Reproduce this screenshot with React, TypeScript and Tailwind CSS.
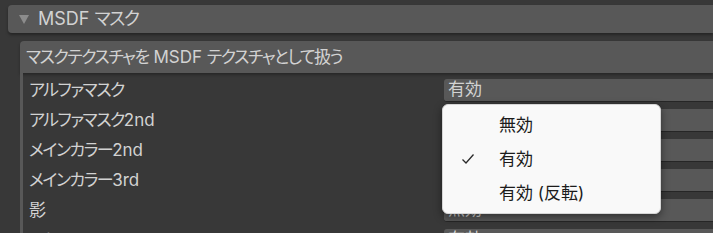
import { memo } from 'react'

const FONT = "font-['Inter','Noto_Sans_CJK_JP',sans-serif] [font-feature-settings:'palt']"

const ROWS = [
  { label: 'アルファマスク', value: '有効' },
  { label: 'アルファマスク2nd', value: '無効' },
  { label: 'メインカラー2nd', value: '無効' },
  { label: 'メインカラー3rd', value: '無効' },
  { label: '影', value: '無効' },
  { label: 'リムライト', value: '有効' },
]

const OPTIONS = [
  { label: '無効', checked: false },
  { label: '有効', checked: true },
  { label: '有効 (反転)', checked: false },
]

// katakana in the editor font is narrower than Noto's, so only the kana runs get tightened
function Label({ text }: { text: string }) {
  const parts = text.split(/([A-Za-z0-9 ]+)/).filter(Boolean)
  return (
    <>
      {parts.map((p, i) =>
        /^[A-Za-z0-9 ]+$/.test(p) ? (
          <span key={i} className="whitespace-pre">{p}</span>
        ) : (
          <span key={i} className="tracking-[-1.5px]">{p}</span>
        )
      )}
    </>
  )
}

function Check() {
  return (
    <svg width="14" height="12" viewBox="0 0 14 12" className="block">
      <polyline points="1.5,6.5 5,10 12.5,1.5" fill="none" stroke="#2a2a2a" strokeWidth="1.3" />
    </svg>
  )
}

function App() {
  return (
    <div className={`relative w-[713px] h-[233px] overflow-hidden bg-[#383838] text-[17px] leading-none text-[#d2d2d2] ${FONT}`}>
      {/* Foldout header */}
      <div className="pt-[5px] pl-[8px]">
        <div className="flex h-[28px] items-center rounded-l-[4px] bg-[#585858] pl-[11px] shadow-[0_2px_3px_rgba(0,0,0,0.35)]">
          <svg width="10" height="10" viewBox="0 0 10 10" className="block">
            <polygon points="0,1 10,1 5,10" fill="#8c8c8c" />
          </svg>
          <span className="ml-[9px] text-[18px]">
            <Label text="MSDF マスク" />
          </span>
        </div>
      </div>

      {/* Inner panel */}
      <div className="mt-[8px] ml-[20px]">
        <div className="flex h-[32px] items-center rounded-tl-[4px] bg-[#585858] pl-[6px] shadow-[0_2px_3px_rgba(0,0,0,0.3)]">
          <span>
            <Label text="マスクテクスチャを MSDF テクスチャとして扱う" />
          </span>
        </div>
        <div className="border-l-[3px] border-[#585858] pt-[2px]">
          {ROWS.map((row) => (
            <div key={row.label} className="flex h-[30px] items-center pl-[6px]">
              <span className="w-[415px] shrink-0">
                <Label text={row.label} />
              </span>
              <div className="flex h-[23px] flex-1 items-center rounded-l-[3px] border-b border-[#262626] bg-[#585858] pl-[4px]">
                {row.value}
              </div>
            </div>
          ))}
        </div>
      </div>

      {/* Dropdown menu */}
      <div className="absolute left-[442px] top-[104px] w-[219px] rounded-[6px] border border-[#d6d6d6] bg-[#f9f9f9] py-[3px] text-[#1b1b1b] shadow-[0_3px_8px_rgba(0,0,0,0.45)]">
        {OPTIONS.map((opt) => (
          <div key={opt.label} className="flex h-[34px] items-center">
            <span className="flex w-[56px] justify-end pr-[24px]">{opt.checked && <Check />}</span>
            <span>{opt.label}</span>
          </div>
        ))}
      </div>
    </div>
  )
}

export default memo(App)
